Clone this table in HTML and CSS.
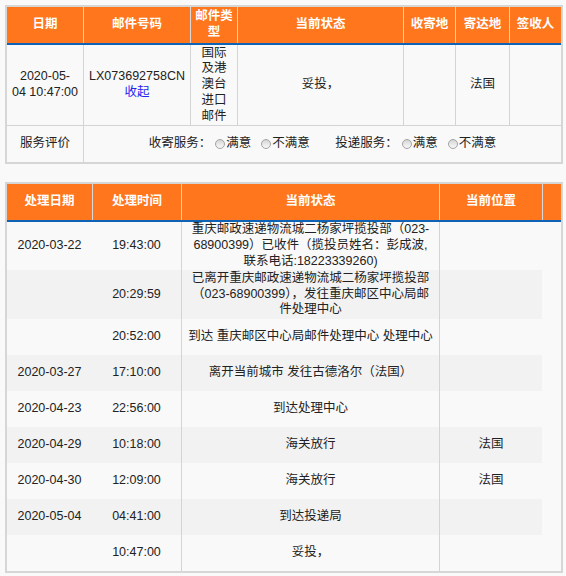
FILE: index.html
```html
<!DOCTYPE html>
<html lang="zh-CN">
<head>
<meta charset="utf-8">
<title>邮件查询</title>
<link rel="stylesheet" href="styles.css">
</head>
<body>
<div class="box">
  <div class="head t1cols">
    <div class="c">日期</div>
    <div class="c">邮件号码</div>
    <div class="c">邮件类型</div>
    <div class="c">当前状态</div>
    <div class="c">收寄地</div>
    <div class="c">寄达地</div>
    <div class="c">签收人</div>
  </div>
  <div class="t1row t1cols">
    <div class="c nw">2020-05-<br>04 10:47:00</div>
    <div class="c"><div>LX073692758CN<br><a class="link" href="#">收起</a></div></div>
    <div class="c">国际及港澳台进口邮件</div>
    <div class="c">妥投，</div>
    <div class="c"></div>
    <div class="c">法国</div>
    <div class="c"></div>
  </div>
  <div class="svc">
    <div class="c">服务评价</div>
    <div class="c svc-body">
      <span class="q">收寄服务：</span><span class="opt"><i class="radio"></i>满意</span><span class="opt opt2"><i class="radio"></i>不满意</span><span class="q q2">投递服务：</span><span class="opt"><i class="radio"></i>满意</span><span class="opt opt2"><i class="radio"></i>不满意</span>
    </div>
  </div>
</div>

<div class="box box2">
  <div class="head t2head">
    <div class="c">处理日期</div>
    <div class="c">处理时间</div>
    <div class="c">当前状态</div>
    <div class="c">当前位置</div>
    <div class="c"></div>
  </div>
  <div class="t2body">
    <div class="r">
      <div class="c">2020-03-22</div>
      <div class="c">19:43:00</div>
      <div class="c st nw">重庆邮政速递物流城二杨家坪揽投部（023-<br>68900399）已收件（揽投员姓名：彭成波,<br>联系电话:18223339260)</div>
      <div class="c loc"></div>
    </div>
    <div class="r alt">
      <div class="c"></div>
      <div class="c">20:29:59</div>
      <div class="c st nw">已离开重庆邮政速递物流城二杨家坪揽投部<br>（023-68900399），发往重庆邮区中心局邮<br>件处理中心</div>
      <div class="c loc"></div>
    </div>
    <div class="r">
      <div class="c"></div>
      <div class="c">20:52:00</div>
      <div class="c st">到达 重庆邮区中心局邮件处理中心 处理中心</div>
      <div class="c loc"></div>
    </div>
    <div class="r alt">
      <div class="c">2020-03-27</div>
      <div class="c">17:10:00</div>
      <div class="c st">离开当前城市 发往古德洛尔（法国）</div>
      <div class="c loc"></div>
    </div>
    <div class="r">
      <div class="c">2020-04-23</div>
      <div class="c">22:56:00</div>
      <div class="c st">到达处理中心</div>
      <div class="c loc"></div>
    </div>
    <div class="r alt">
      <div class="c">2020-04-29</div>
      <div class="c">10:18:00</div>
      <div class="c st">海关放行</div>
      <div class="c loc">法国</div>
    </div>
    <div class="r">
      <div class="c">2020-04-30</div>
      <div class="c">12:09:00</div>
      <div class="c st">海关放行</div>
      <div class="c loc">法国</div>
    </div>
    <div class="r alt">
      <div class="c">2020-05-04</div>
      <div class="c">04:41:00</div>
      <div class="c st">到达投递局</div>
      <div class="c loc"></div>
    </div>
    <div class="r">
      <div class="c"></div>
      <div class="c">10:47:00</div>
      <div class="c st">妥投，</div>
      <div class="c loc"></div>
    </div>
  </div>
</div>
</body>
</html>
```

FILE: styles.css
```css
html, body {
  margin: 0;
  background: #f9f9f9;
}
body {
  padding: 5px 3px 0 5px;
  font-family: "Liberation Sans", "Noto Sans CJK SC", sans-serif;
  font-size: 12.5px;
  line-height: 15.8px;
  color: #222;
}
.box {
  width: 558px;
  box-sizing: border-box;
  border: 2px solid #d6d6d6;
}
.box2 {
  margin-top: 18px;
}
.c {
  display: flex;
  align-items: center;
  justify-content: center;
  text-align: center;
  box-sizing: border-box;
}
.nw {
  white-space: nowrap;
}
.head {
  display: grid;
  background: #ff761c;
  border-bottom: 2px solid #0f63b6;
  color: #fff;
  font-weight: bold;
}
.head > .c {
  height: 36px;
  padding: 0 4px;
}
.head > .c + .c {
  border-left: 1px solid #d9d9d9;
}
.t1cols {
  display: grid;
  grid-template-columns: 76px 107px 47px 166px 52px 54px 52px;
}
.t1row > .c {
  padding: 0.5px 5px;
}
.t1row > .c:first-child {
  padding: 0.5px 2px;
}
.t1row > .c + .c {
  border-left: 1px solid #d4d4d4;
}
.link {
  color: #2424f0;
  text-decoration: none;
}
.svc {
  display: grid;
  grid-template-columns: 76px 1fr;
  border-top: 1px solid #d4d4d4;
}
.svc > .c {
  height: 36px;
}
.svc > .c + .c {
  border-left: 1px solid #d4d4d4;
}
.svc-body {
  white-space: nowrap;
}
.opt {
  display: inline-flex;
  align-items: center;
  margin-left: 4px;
}
.opt2 {
  margin-left: 10px;
}
.q2 {
  margin-left: 25.5px;
}
.radio {
  display: inline-block;
  width: 10px;
  height: 10px;
  margin-right: 1px;
  box-sizing: border-box;
  border: 1px solid #a4a4a4;
  border-radius: 50%;
  background: linear-gradient(180deg, #d4d4d4 0%, #ececec 60%, #f6f6f6 100%);
}
.t2head {
  grid-template-columns: 85px 89px 258px 103px 19px;
}
.t2body {
  width: 535px;
}
.t2body .r {
  display: grid;
  grid-template-columns: 85px 89px 258px 103px;
  min-height: 36px;
  background: #f9f9f9;
}
.t2body .r.alt {
  background: #f2f2f2;
}
.t2body .r > .c {
  padding: 0.5px 4px;
}
.t2body .st,
.t2body .loc {
  border-left: 1px solid #d4d4d4;
}
```
